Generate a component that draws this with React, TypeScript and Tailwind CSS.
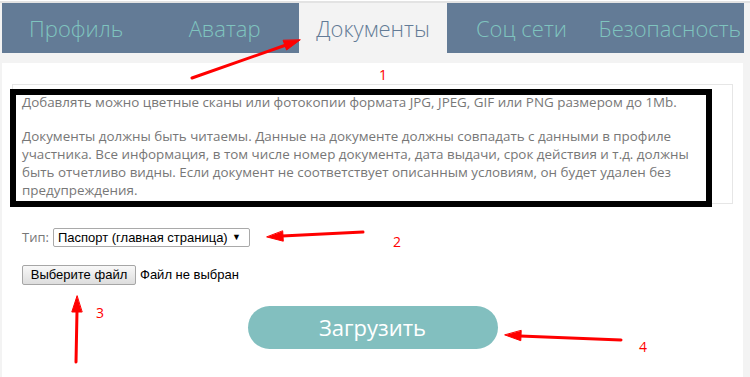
const tabs = ["Профиль", "Аватар", "Документы", "Соц сети", "Безопасность"];

function Annotations() {
  return (
    <>
      <svg className="pointer-events-none absolute left-0 top-0" width="750" height="377">
        <g stroke="#ff0000" strokeWidth="3" strokeLinecap="round" fill="#ff0000">
          <line x1="192" y1="78" x2="286" y2="45" />
          <polygon points="300,40 286.6,50 283.2,40.6" strokeWidth="1" />
          <line x1="363" y1="232" x2="282" y2="236" />
          <polygon points="267,237 283.3,241.2 282.7,231.2" strokeWidth="1" />
          <line x1="76" y1="362" x2="77" y2="311" />
          <polygon points="77,296 71.8,312 81.8,312" strokeWidth="1" />
          <line x1="621" y1="340" x2="520" y2="336" />
          <polygon points="505,335 520.8,340.7 521.2,330.7" strokeWidth="1" />
        </g>
      </svg>
      <span className="absolute left-[379px] top-[68px] text-[14px] leading-none text-[#ff0000]">1</span>
      <span className="absolute left-[393px] top-[235px] text-[14px] leading-none text-[#ff0000]">2</span>
      <span className="absolute left-[96px] top-[306px] text-[14px] leading-none text-[#ff0000]">3</span>
      <span className="absolute left-[639px] top-[340px] text-[14px] leading-none text-[#ff0000]">4</span>
    </>
  );
}

export default function App() {
  return (
    <div className="relative h-[377px] overflow-hidden bg-[#f3f3f3] font-['Open_Sans',sans-serif]">
      <div className="h-px bg-white" />
      <div className="h-[2px] bg-[#e3e3e3]" />

      {/* Tabs */}
      <div className="ml-[2px] flex w-[742px] bg-[#637b96]">
        {tabs.map((t) =>
          t === "Документы" ? (
            <div key={t} className="flex h-[50px] flex-1 items-center justify-center bg-[#f3f3f3] text-[22px] font-light text-[#637b96]">
              {t}
            </div>
          ) : (
            <div key={t} className="flex h-[50px] flex-1 items-center justify-center text-[22px] font-light text-[#7fc4bf]">
              {t}
            </div>
          )
        )}
      </div>

      {/* Panel */}
      <div className="ml-[2px] mt-[10px] h-[314px] w-[741px] bg-white pt-[21px]">
        <div className="relative mx-[10px] border border-[#e6e6e6] pb-[4px] pl-[9px] pr-[20px] pt-[8px] text-[13.4px] leading-[18px] text-[#777]">
          <p>Добавлять можно цветные сканы или фотокопии формата JPG, JPEG, GIF или PNG размером до 1Mb.</p>
          <p className="mt-[16px]">
            Документы должны быть читаемы. Данные на документе должны совпадать с данными в профиле участника. Все информация, в том числе номер документа, дата выдачи, срок действия и т.д. должны быть отчетливо видны. Если документ не соответствует описанным условиям, он будет удален без предупреждения.
          </p>
          <div className="pointer-events-none absolute left-[-3px] top-[4px] h-[118px] w-[702px] border-[6px] border-black" />
        </div>

        <div className="ml-[20px] mt-[24px] flex items-center gap-[4px]">
          <span className="text-[13px] text-[#777]">Тип:</span>
          <div className="flex h-[19px] w-[197px] items-center justify-between rounded-[2px] border border-[#a9a9a9] pl-[4px] pr-[8px] font-['Liberation_Sans',Arial,sans-serif] text-[13px] text-black">
            <span>Паспорт (главная страница)</span>
            <span className="text-[9px]">▼</span>
          </div>
        </div>

        <div className="ml-[20px] mt-[17px] flex items-center gap-[4px] font-['Liberation_Sans',Arial,sans-serif] text-[13px] text-black">
          <div className="flex h-[20px] w-[114px] items-center justify-center rounded-[2px] border border-[#a6a6a6] bg-gradient-to-b from-[#f8f8f8] to-[#dddddd]">
            Выберите файл
          </div>
          <span>Файл не выбран</span>
        </div>

        <div className="mx-auto mt-[21px] flex h-[43px] w-[250px] items-center justify-center rounded-full bg-[#82bfbf] text-[22px] text-white">
          Загрузить
        </div>
      </div>

      <Annotations />
    </div>
  );
}
